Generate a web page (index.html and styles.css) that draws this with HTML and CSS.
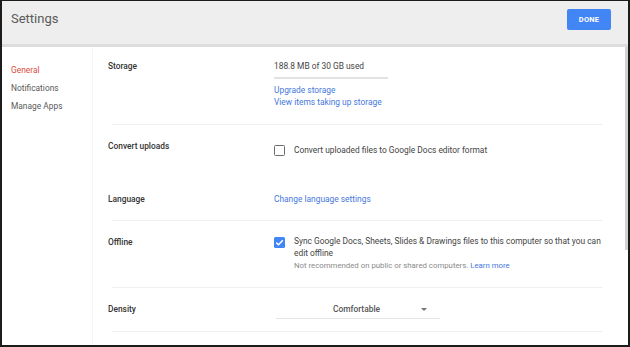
FILE: index.html
```html
<!DOCTYPE html>
<html>
<head>
<meta charset="utf-8">
<link rel="stylesheet" href="styles.css">
</head>
<body>
<div class="frame">
  <header class="header">
    <div class="title">Settings</div>
    <button class="done">DONE</button>
  </header>
  <div class="body">
    <nav class="sidebar">
      <div class="nav-item active">General</div>
      <div class="nav-item">Notifications</div>
      <div class="nav-item">Manage Apps</div>
    </nav>
    <main class="content">
      <section class="section s-storage">
        <div class="label">Storage</div>
        <div class="value">
          <div class="line">188.8 MB of 30 GB used</div>
          <div class="bar"></div>
          <a class="link lk1">Upgrade storage</a>
          <a class="link lk2">View items taking up storage</a>
        </div>
      </section>
      <section class="section s-convert noline">
        <div class="label">Convert uploads</div>
        <div class="value v-convert">
          <div class="check-row">
            <span class="box"></span>
            <span class="line">Convert uploaded files to Google Docs editor format</span>
          </div>
        </div>
      </section>
      <section class="section s-lang">
        <div class="label">Language</div>
        <div class="value">
          <a class="link">Change language settings</a>
        </div>
      </section>
      <section class="section s-offline">
        <div class="label">Offline</div>
        <div class="value">
          <div class="check-row">
            <span class="box checked"><svg viewBox="0 0 11 11" width="11" height="11"><path d="M2.3 5.6 L4.5 7.7 L8.8 3.2" fill="none" stroke="#fff" stroke-width="1.5"/></svg></span>
            <div class="desc">
              <div class="sync">Sync Google Docs, Sheets, Slides &amp; Drawings files to this computer so that you can edit offline</div>
              <div class="note">Not recommended on public or shared computers. <a class="link-inline">Learn more</a></div>
            </div>
          </div>
        </div>
      </section>
      <section class="section s-density">
        <div class="label">Density</div>
        <div class="value">
          <div class="select">
            <span class="select-text">Comfortable</span>
            <span class="arrow"></span>
          </div>
        </div>
      </section>
    </main>
    <div class="track"><div class="thumb"></div></div>
  </div>
</div>
</body>
</html>
```

FILE: styles.css
```css
* { box-sizing: border-box; }
html, body { margin: 0; padding: 0; background: #fff; }
body { font-family: Roboto, "Liberation Sans", Arial, sans-serif; }

.frame {
  width: 630px;
  height: 347px;
  border-top: 1px solid #1c1c1c;
  border-left: 2px solid #1c1c1c;
  border-right: 2px solid #1c1c1c;
  border-bottom: 2px solid #1c1c1c;
  display: flex;
  flex-direction: column;
  overflow: hidden;
}

.header {
  height: 46px;
  flex: none;
  background: #eeeeee;
  border-bottom: 3px solid #dddddd;
  display: flex;
  align-items: flex-start;
  justify-content: space-between;
  padding: 0 17px 0 9px;
}
.title {
  font-size: 13px;
  line-height: 18px;
  margin-top: 9px;
  color: #5a5a5a;
}
.done {
  margin-top: 8px;
  width: 44px;
  height: 21px;
  border: none;
  border-radius: 2px;
  background: #4285f4;
  color: #fff;
  font-family: Roboto, "Liberation Sans", Arial, sans-serif;
  font-weight: 700;
  font-size: 7.5px;
  letter-spacing: 0.2px;
  padding: 0;
}

.body {
  flex: 1;
  display: flex;
  min-height: 0;
}
.sidebar {
  width: 91px;
  flex: none;
  border-right: 1px solid #f6f6f6;
  padding: 14px 0 0 9px;
}
.nav-item {
  font-size: 8.4px;
  line-height: 18px;
  color: #5a5a5a;
}
.nav-item.active { color: #dd4b39; }

.content {
  flex: 1;
  min-width: 0;
}
.track {
  width: 4px;
  flex: none;
}
.thumb {
  margin-left: 1px;
  width: 3px;
  height: 203px;
  background: #d2d2d2;
}

.section {
  margin: 0 21px 0 19px;
  display: flex;
  border-bottom: 1px solid #f1f1f1;
  font-size: 8.4px;
  line-height: 12px;
  color: #444;
}
.section.noline { border-bottom: none; }
.label {
  width: 166px;
  margin-left: -4px;
  flex: none;
  font-weight: 500;
  color: #333;
}
.value { flex: 1; min-width: 0; }

.s-storage { padding: 13px 0 16px; }
.bar {
  width: 114px;
  height: 2px;
  background: #e2e2e2;
  margin: 5px 0 6px;
}
.link {
  display: block;
  color: #4678dc;
  line-height: 11.5px;
}
.s-lang .link { line-height: 12px; }

.s-convert { padding: 15px 0 16px; }
.v-convert { padding-top: 4px; }
.check-row {
  display: flex;
  align-items: flex-start;
}
.box {
  width: 11px;
  height: 11px;
  flex: none;
  border: 1.5px solid #6a6a6a;
  border-radius: 1.5px;
  margin: 0.5px 9px 0 0;
  display: block;
}
.box.checked {
  border: none;
  background: #4285f4;
  margin-top: 0.5px;
}
.box svg { display: block; }

.s-lang { padding: 21px 0 15px; }

.s-offline { padding: 15px 0 15px; }
.desc { width: 318px; }
.sync { line-height: 11.8px; color: #444; }
.note {
  font-size: 7.8px;
  line-height: 12px;
  color: #8a8a8a;
}
.link-inline { color: #4678dc; }

.s-density { padding: 15px 0 12px; }
.select {
  margin-left: 2px;
  width: 164px;
  height: 16px;
  border-bottom: 1px solid #e6e6e6;
  padding-bottom: 3px;
  position: relative;
  text-align: center;
}
.select-text {
  display: inline-block;
  margin-right: 3px;
  color: #555;
  font-weight: 500;
}
.arrow {
  position: absolute;
  right: 13px;
  top: 5px;
  width: 0;
  height: 0;
  border-left: 3px solid transparent;
  border-right: 3px solid transparent;
  border-top: 3px solid #757575;
}
```
